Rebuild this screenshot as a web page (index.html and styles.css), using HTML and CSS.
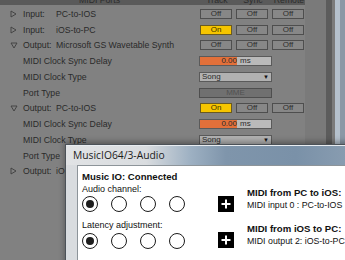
FILE: index.html
```
<!DOCTYPE html>
<html>
<head>
<meta charset="utf-8">
<link rel="stylesheet" href="styles.css">
</head>
<body>
<div class="screen">
  <div class="panel">
    <div class="head">
      <span class="h-ports">MIDI Ports</span>
      <span class="h-col">Track</span>
      <span class="h-col">Sync</span>
      <span class="h-col">Remote</span>
    </div>
    <div class="rows">
      <div class="row">
        <span class="tri"><svg width="7" height="8" viewBox="0 0 7 8"><path d="M1 1 L6 4 L1 7 Z" fill="none" stroke="#3e3e3e" stroke-width="0.9"/></svg></span>
        <span class="kind">Input:</span><span class="name">PC-to-IOS</span>
        <div class="ctrls"><span class="btn">Off</span><span class="btn">Off</span><span class="btn">Off</span></div>
      </div>
      <div class="row">
        <span class="tri"><svg width="7" height="8" viewBox="0 0 7 8"><path d="M1 1 L6 4 L1 7 Z" fill="none" stroke="#3e3e3e" stroke-width="0.9"/></svg></span>
        <span class="kind">Input:</span><span class="name">iOS-to-PC</span>
        <div class="ctrls"><span class="btn on">On</span><span class="btn">Off</span><span class="btn">Off</span></div>
      </div>
      <div class="row">
        <span class="tri"><svg width="8" height="7" viewBox="0 0 8 7"><path d="M1 1 L7 1 L4 6 Z" fill="none" stroke="#3e3e3e" stroke-width="0.9"/></svg></span>
        <span class="kind">Output:</span><span class="name">Microsoft GS Wavetable Synth</span>
        <div class="ctrls"><span class="btn">Off</span><span class="btn">Off</span><span class="btn">Off</span></div>
      </div>
      <div class="row">
        <span class="tri"></span><span class="sub">MIDI Clock Sync Delay</span>
        <div class="ctrls"><div class="field"><span class="fill">0.00</span><span class="unit">ms</span></div></div>
      </div>
      <div class="row">
        <span class="tri"></span><span class="sub">MIDI Clock Type</span>
        <div class="ctrls"><div class="drop"><span>Song</span><span class="arrow">&#9660;</span></div></div>
      </div>
      <div class="row">
        <span class="tri"></span><span class="sub">Port Type</span>
        <div class="ctrls"><div class="mme">MME</div></div>
      </div>
      <div class="row">
        <span class="tri"><svg width="8" height="7" viewBox="0 0 8 7"><path d="M1 1 L7 1 L4 6 Z" fill="none" stroke="#3e3e3e" stroke-width="0.9"/></svg></span>
        <span class="kind">Output:</span><span class="name">PC-to-IOS</span>
        <div class="ctrls"><span class="btn on">On</span><span class="btn">Off</span><span class="btn">Off</span></div>
      </div>
      <div class="row">
        <span class="tri"></span><span class="sub">MIDI Clock Sync Delay</span>
        <div class="ctrls"><div class="field"><span class="fill">0.00</span><span class="unit">ms</span></div></div>
      </div>
      <div class="row">
        <span class="tri"></span><span class="sub">MIDI Clock Type</span>
        <div class="ctrls"><div class="drop"><span>Song</span><span class="arrow">&#9660;</span></div></div>
      </div>
      <div class="row">
        <span class="tri"></span><span class="sub">Port Type</span>
        <div class="ctrls"><div class="mme">MME</div></div>
      </div>
      <div class="row">
        <span class="tri"><svg width="7" height="8" viewBox="0 0 7 8"><path d="M1 1 L6 4 L1 7 Z" fill="none" stroke="#3e3e3e" stroke-width="0.9"/></svg></span>
        <span class="kind">Output:</span><span class="name">iOS-to-PC</span>
        <div class="ctrls"><span class="btn">Off</span><span class="btn">Off</span><span class="btn">Off</span></div>
      </div>
    </div>
  </div>
  <div class="gutter"></div>
  <div class="edge e1"></div>
  <div class="edge e2"></div>
  <div class="edge e3"></div>
  <div class="edge e4"></div>

  <div class="dlg">
    <div class="dlg-title">MusicIO64/3-Audio</div>
    <div class="dlg-body">
      <div class="dlg-left">
        <div class="status">Music IO: Connected</div>
        <div class="cap">Audio channel:</div>
        <div class="radios">
          <span class="radio checked"></span><span class="radio"></span><span class="radio"></span><span class="radio"></span>
        </div>
        <div class="cap cap2">Latency adjustment:</div>
        <div class="radios r2">
          <span class="radio checked"></span><span class="radio"></span><span class="radio"></span><span class="radio"></span>
        </div>
      </div>
      <div class="dlg-right">
        <div class="route">
          <span class="plus"><svg width="16" height="16" viewBox="0 0 16 16"><rect width="16" height="16" fill="#000"/><path d="M8 3.5 V12.5 M3.5 8 H12.5" stroke="#fff" stroke-width="2"/></svg></span>
          <div class="route-text"><div class="rt-title">MIDI from PC to iOS:</div><div class="rt-sub">MIDI input 0 : PC-to-IOS</div></div>
        </div>
        <div class="route route2">
          <span class="plus"><svg width="16" height="16" viewBox="0 0 16 16"><rect width="16" height="16" fill="#000"/><path d="M8 3.5 V12.5 M3.5 8 H12.5" stroke="#fff" stroke-width="2"/></svg></span>
          <div class="route-text"><div class="rt-title">MIDI from iOS to PC:</div><div class="rt-sub">MIDI output 2: iOS-to-PC</div></div>
        </div>
      </div>
    </div>
  </div>
</div>
</body>
</html>
```
FILE: styles.css
```
html, body {
  margin: 0;
  padding: 0;
}
body {
  width: 345px;
  height: 260px;
  overflow: hidden;
  background: #7f7f7f;
  font-family: "Liberation Sans", Arial, sans-serif;
}
.screen {
  position: relative;
  display: flex;
  width: 345px;
  height: 260px;
  overflow: hidden;
}
.panel {
  width: 305px;
  flex: none;
  background: #818181;
  color: #2a2a2a;
  font-size: 8.7px;
}
.head {
  height: 5px;
  background: #5a5a5a;
  display: flex;
  align-items: flex-end;
  overflow: hidden;
  line-height: 9px;
  color: #2c2c2c;
}
.h-ports {
  width: 199px;
  text-align: center;
  flex: none;
}
.h-col {
  width: 36px;
  text-align: center;
  flex: none;
}
.rows {
  padding-top: 1px;
}
.row {
  height: 15.75px;
  display: flex;
  align-items: center;
}
.tri {
  width: 23px;
  flex: none;
  display: flex;
  justify-content: flex-start;
  padding-left: 10px;
  box-sizing: border-box;
  align-items: center;
}
.tri svg { display: block; }
.kind {
  width: 33px;
  flex: none;
}
.name {
  width: 143px;
  flex: none;
  white-space: nowrap;
  overflow: hidden;
}
.sub {
  width: 176px;
  flex: none;
  white-space: nowrap;
}
.ctrls {
  display: flex;
  gap: 4px;
  width: 106px;
  flex: none;
}
.btn {
  width: 32px;
  height: 10px;
  box-sizing: border-box;
  border: 1px solid #4e4e4e;
  background: #878787;
  font-size: 8px;
  line-height: 8px;
  text-align: center;
  color: #2e2e2e;
}
.btn:first-child { margin-left: 1px; }
.btn.on {
  background: #f6c500;
  border-color: #6a5a20;
  color: #3a3000;
}
.field {
  width: 73px;
  height: 10px;
  box-sizing: border-box;
  border: 1px solid #5a5a5a;
  background: #bababa;
  display: flex;
  font-size: 8px;
  line-height: 8px;
}
.fill {
  width: 37px;
  background: #e2703a;
  text-align: right;
}
.unit {
  padding-left: 3px;
}
.drop {
  width: 73px;
  height: 10px;
  box-sizing: border-box;
  border: 1px solid #5a5a5a;
  background: #b1b1b1;
  display: flex;
  justify-content: space-between;
  padding: 0 2px 0 2px;
  font-size: 8px;
  line-height: 8px;
}
.arrow {
  font-size: 6px;
  color: #111;
}
.mme {
  width: 73px;
  height: 10px;
  box-sizing: border-box;
  border: 1px solid #4e4e4e;
  background: #707070;
  color: #505050;
  text-align: center;
  font-size: 8px;
  line-height: 8px;
}
.gutter {
  width: 21px;
  flex: none;
  background: #7a7a7a;
}
.edge { flex: none; }
.e1 { width: 6px; background: #5c5c5c; }
.e2 { width: 3px; background: #7b7b7b; }
.e3 { width: 5px; background: #b5c1cd; }
.e4 { width: 5px; background: #8b98a6; }

.dlg {
  position: absolute;
  left: 65px;
  top: 144px;
  width: 300px;
  height: 130px;
  box-sizing: border-box;
  border: 1px solid #4c5258;
  background: #d9dcdf;
  box-shadow: 0 -2px 6px rgba(0,0,0,0.35);
  display: flex;
  flex-direction: column;
}
.dlg-title {
  height: 20px;
  flex: none;
  background: linear-gradient(90deg, #e1e3e5 0px, #d9dcdf 80px, #9db0c2 125px, #7f95ab 160px, #7a91a8 230px, #889cb0 280px);
  border-top: 1px solid #e8ecf0;
  box-sizing: border-box;
  font-family: "Open Sans", "Liberation Sans", sans-serif;
  font-size: 10.3px;
  line-height: 19px;
  color: #1c1c1c;
  padding-left: 7px;
}
.dlg-body {
  flex: 1;
  margin-left: 11px;
  background: #fff;
  border-top: 1px solid #8d9499;
  border-left: 1px solid #8d9499;
  display: flex;
  font-family: "Liberation Sans", Arial, sans-serif;
  color: #111;
}
.dlg-left {
  padding-left: 4px;
  padding-top: 5px;
  width: 103px;
  flex: none;
}
.status {
  font-weight: bold;
  font-size: 9.6px;
  line-height: 12px;
}
.cap {
  font-size: 9px;
  line-height: 12px;
}
.cap2 { margin-top: 7px; }
.radios {
  display: flex;
  gap: 13px;
  margin-top: 1px;
}
.radios.r2 { margin-top: 2px; }
.radio {
  width: 16px;
  height: 16px;
  flex: none;
  box-sizing: border-box;
  border: 1.5px solid #1b1b1b;
  border-radius: 50%;
  background: #fff;
  display: flex;
  align-items: center;
  justify-content: center;
}
.radio.checked::after {
  content: "";
  width: 8px;
  height: 8px;
  border-radius: 50%;
  background: #1e1e1e;
}
.dlg-right {
  margin-left: 33px;
  padding-top: 20px;
}
.route {
  display: flex;
  align-items: flex-end;
  gap: 13px;
}
.route2 { margin-top: 10px; }
.plus svg { display: block; }
.route-text {
  white-space: nowrap;
}
.rt-title {
  font-weight: bold;
  font-size: 9.6px;
  line-height: 13px;
}
.rt-sub {
  font-size: 8.8px;
  line-height: 13px;
}
```
